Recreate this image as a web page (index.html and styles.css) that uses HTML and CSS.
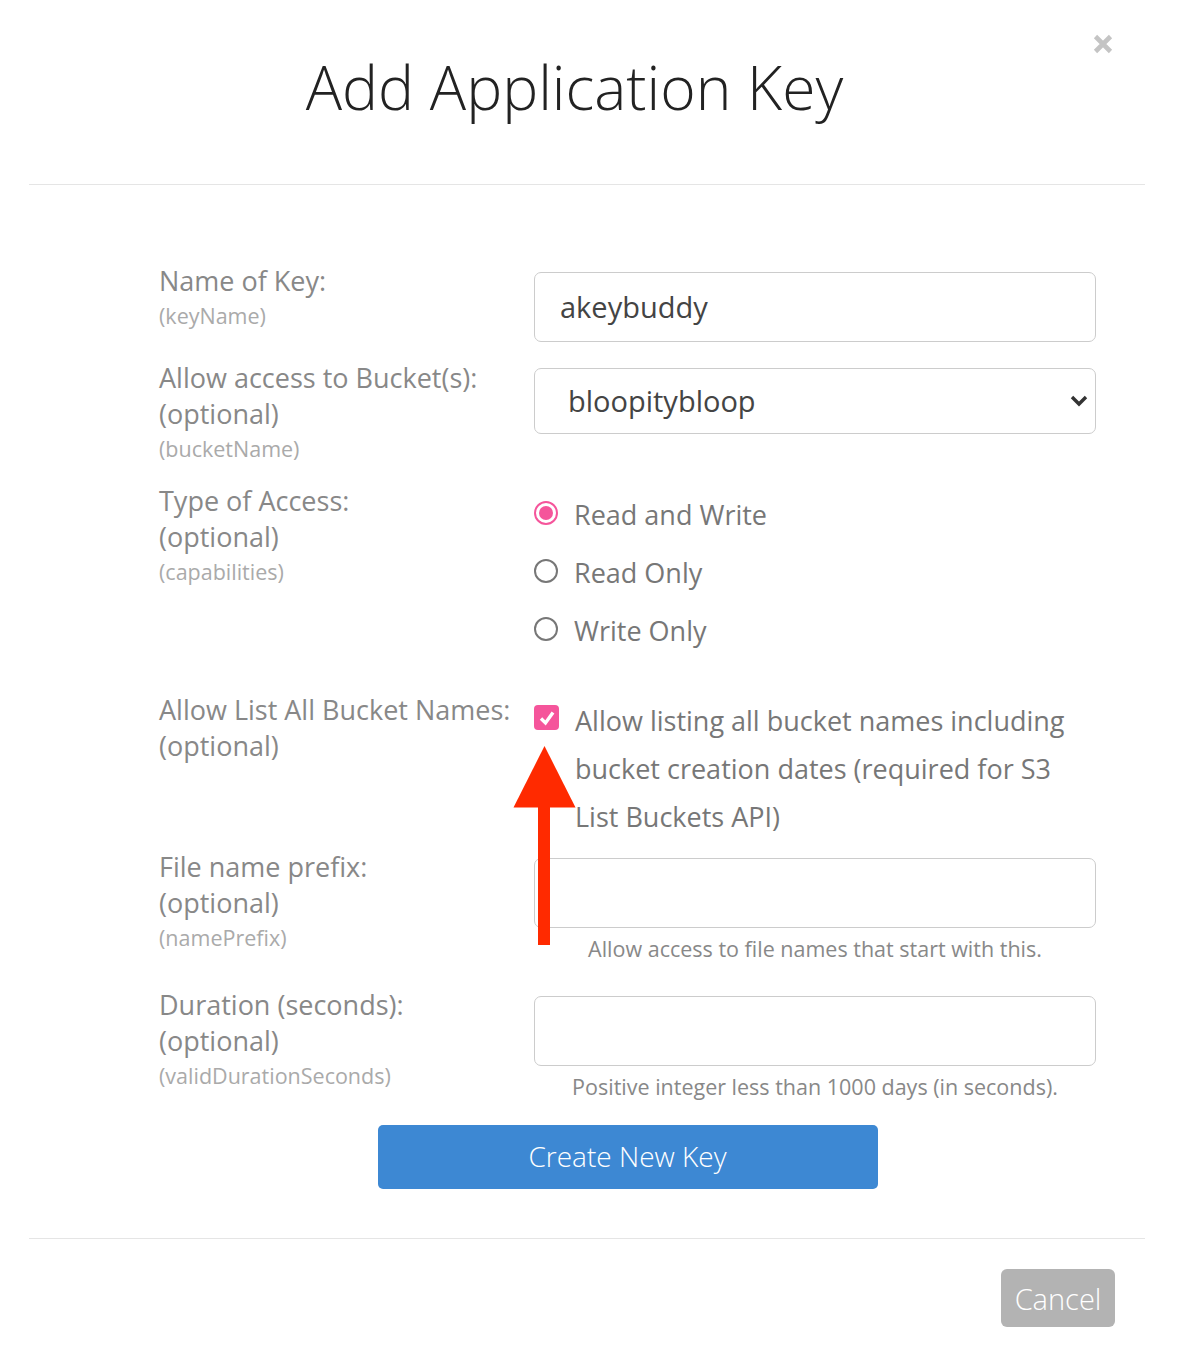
FILE: index.html
```html
<!DOCTYPE html>
<html>
<head>
<meta charset="UTF-8">
<title>Add Application Key</title>
<link rel="stylesheet" href="styles.css">
</head>
<body>
<div class="modal">
	<!-- 제목 -->
	<div class="modal-header">
		<h1 class="modal-title">Add Application Key</h1>
		<button type="button" class="close">
			<svg width="20" height="20" viewBox="0 0 20 20"><path d="M2.5 2.5 L17.5 17.5 M17.5 2.5 L2.5 17.5" stroke="#c4c4c4" stroke-width="4.6" fill="none"/></svg>
		</button>
	</div>

	<div class="modal-body">
		<form class="key-form">
			<div class="row">
				<div>
					<div class="label">Name of Key:</div>
					<div class="param">(keyName)</div>
				</div>
				<div>
					<input type="text" class="text-input" value="akeybuddy">
				</div>
			</div>

			<div class="row row-bucket">
				<div>
					<div class="label">Allow access to Bucket(s):</div>
					<div class="label">(optional)</div>
					<div class="param">(bucketName)</div>
				</div>
				<div class="select-wrap">
					<select class="select">
						<option>bloopitybloop</option>
					</select>
					<svg class="select-chevron" width="18" height="12" viewBox="0 0 18 12"><polyline points="2,2 9,9 16,2" stroke="#333" stroke-width="3.4" fill="none"/></svg>
				</div>
			</div>

			<div class="row row-access">
				<div>
					<div class="label">Type of Access:</div>
					<div class="label">(optional)</div>
					<div class="param">(capabilities)</div>
				</div>
				<div class="choices">
					<div class="choice"><span class="radio on"></span>Read and Write</div>
					<div class="choice"><span class="radio"></span>Read Only</div>
					<div class="choice"><span class="radio"></span>Write Only</div>
				</div>
			</div>

			<div class="row row-list">
				<div>
					<div class="label nowrap">Allow List All Bucket Names:</div>
					<div class="label">(optional)</div>
				</div>
				<div class="check-row">
					<span class="checkbox">
						<svg width="20" height="20" viewBox="0 0 20 20"><polyline points="4,10.5 8.5,15 16,4.5" stroke="#fff" stroke-width="3.4" fill="none"/></svg>
					</span>
					<div class="check-text">Allow listing all bucket names including<br>bucket creation dates (required for S3<br>List Buckets API)</div>
				</div>
			</div>

			<div class="row row-prefix">
				<div>
					<div class="label">File name prefix:</div>
					<div class="label">(optional)</div>
					<div class="param">(namePrefix)</div>
				</div>
				<div>
					<input type="text" class="text-input">
					<div class="help">Allow access to file names that start with this.</div>
				</div>
			</div>

			<div class="row row-duration">
				<div>
					<div class="label">Duration (seconds):</div>
					<div class="label">(optional)</div>
					<div class="param">(validDurationSeconds)</div>
				</div>
				<div>
					<input type="text" class="text-input">
					<div class="help">Positive integer less than 1000 days (in seconds).</div>
				</div>
			</div>

			<button type="button" class="btn-create">Create New Key</button>
		</form>

		<!-- 빨간 화살표 (체크박스 표시) -->
		<svg class="arrow" width="70" height="205" viewBox="0 0 70 205">
			<polygon points="34.5,2 3.5,63.5 65.5,63.5" fill="#ff2a00"/>
			<rect x="28" y="62" width="12" height="139" fill="#ff2a00"/>
		</svg>
	</div>

	<div class="modal-footer">
		<button type="button" class="btn-cancel">Cancel</button>
	</div>
</div>
</body>
</html>
```

FILE: styles.css
```css
	body
	{
		margin: 0;
		background: #ffffff;
		font-family: "Open Sans", "Noto Sans", sans-serif;
	}
	.modal
	{
		width: 1116px;
		margin-left: 29px;
	}
	.modal-header
	{
		position: relative;
		padding: 50px 0 61px;
		border-bottom: 1px solid #e5e5e5;
	}
	.modal-title
	{
		margin: 0;
		padding-right: 25px;
		text-align: center;
		font-size: 60.5px;
		font-weight: 300;
		line-height: 73px;
		color: #222222;
	}
	.close
	{
		position: absolute;
		top: 34px;
		right: 32px;
		width: 20px;
		height: 20px;
		padding: 0;
		border: 0;
		background: none;
	}
	.close svg
	{
		display: block;
	}

	/* 본문 */
	.modal-body
	{
		position: relative;
		padding: 77.5px 0 49px 130px;
	}
	.key-form
	{
		width: 937px;
	}
	.row
	{
		display: grid;
		grid-template-columns: 375px 562px;
		align-items: start;
	}
	.row-bucket { margin-top: 18px; }
	.row-access { margin-top: 20px; }
	.row-list { margin-top: 33px; }
	.row-prefix { margin-top: 8px; }
	.row-duration { margin-top: 23.5px; }

	.label
	{
		font-size: 27px;
		line-height: 36px;
		color: #888888;
	}
	.nowrap
	{
		white-space: nowrap;
	}
	.param
	{
		margin-top: 3px;
		font-size: 21.5px;
		line-height: 28.5px;
		color: #aaaaaa;
	}

	.text-input
	{
		display: block;
		box-sizing: border-box;
		width: 100%;
		height: 70px;
		margin: 9px 0 0;
		padding: 0 25px;
		border: 1px solid #cccccc;
		border-radius: 7px;
		font-family: "Open Sans", "Noto Sans", sans-serif;
		font-size: 29px;
		color: #444444;
		outline: none;
	}
	.help
	{
		margin-top: 7px;
		text-align: center;
		font-size: 21.5px;
		line-height: 28px;
		color: #888888;
	}

	.select-wrap
	{
		position: relative;
		margin-top: 8px;
	}
	.select
	{
		-webkit-appearance: none;
		appearance: none;
		display: block;
		box-sizing: border-box;
		width: 100%;
		height: 66px;
		padding: 0 60px 0 33px;
		border: 1px solid #cccccc;
		border-radius: 7px;
		background: #ffffff;
		font-family: "Open Sans", "Noto Sans", sans-serif;
		font-size: 29px;
		color: #444444;
	}
	.select-chevron
	{
		position: absolute;
		top: 27px;
		right: 8px;
	}

	/* 라디오 */
	.choices
	{
		margin-top: 2px;
	}
	.choice
	{
		display: flex;
		align-items: center;
		gap: 16px;
		height: 58px;
		font-size: 27px;
		color: #777777;
	}
	.radio
	{
		box-sizing: border-box;
		display: flex;
		align-items: center;
		justify-content: center;
		flex: none;
		width: 24px;
		height: 24px;
		margin-bottom: 2px;
		border: 2px solid #777777;
		border-radius: 50%;
	}
	.radio.on
	{
		border-color: #f5559b;
	}
	.radio.on::after
	{
		content: "";
		width: 14px;
		height: 14px;
		border-radius: 50%;
		background: #f5559b;
	}

	/* 체크박스 */
	.check-row
	{
		display: flex;
		gap: 16px;
		margin-top: 5px;
	}
	.checkbox
	{
		display: flex;
		align-items: center;
		justify-content: center;
		flex: none;
		width: 25px;
		height: 25px;
		margin-top: 8px;
		border-radius: 4px;
		background: #f5559b;
	}
	.check-text
	{
		font-size: 27px;
		line-height: 48px;
		color: #777777;
	}

	.btn-create
	{
		display: block;
		width: 500px;
		height: 64px;
		margin: 24.5px auto 0;
		padding: 0 0 3px;
		border: 0;
		border-radius: 5px;
		background: #3d88d3;
		color: #ffffff;
		font-family: "Open Sans", "Noto Sans", sans-serif;
		font-size: 28px;
		font-weight: 300;
		cursor: pointer;
	}

	.arrow
	{
		position: absolute;
		left: 481px;
		top: 559px;
	}

	/* 하단 */
	.modal-footer
	{
		display: flex;
		justify-content: flex-end;
		padding: 30px 30px 23px;
		border-top: 1px solid #e5e5e5;
	}
	.btn-cancel
	{
		width: 114px;
		height: 58px;
		padding: 0;
		border: 0;
		border-radius: 6px;
		background: #b3b3b3;
		color: #ffffff;
		font-family: "Open Sans", "Noto Sans", sans-serif;
		font-size: 29px;
		font-weight: 300;
	}
```
